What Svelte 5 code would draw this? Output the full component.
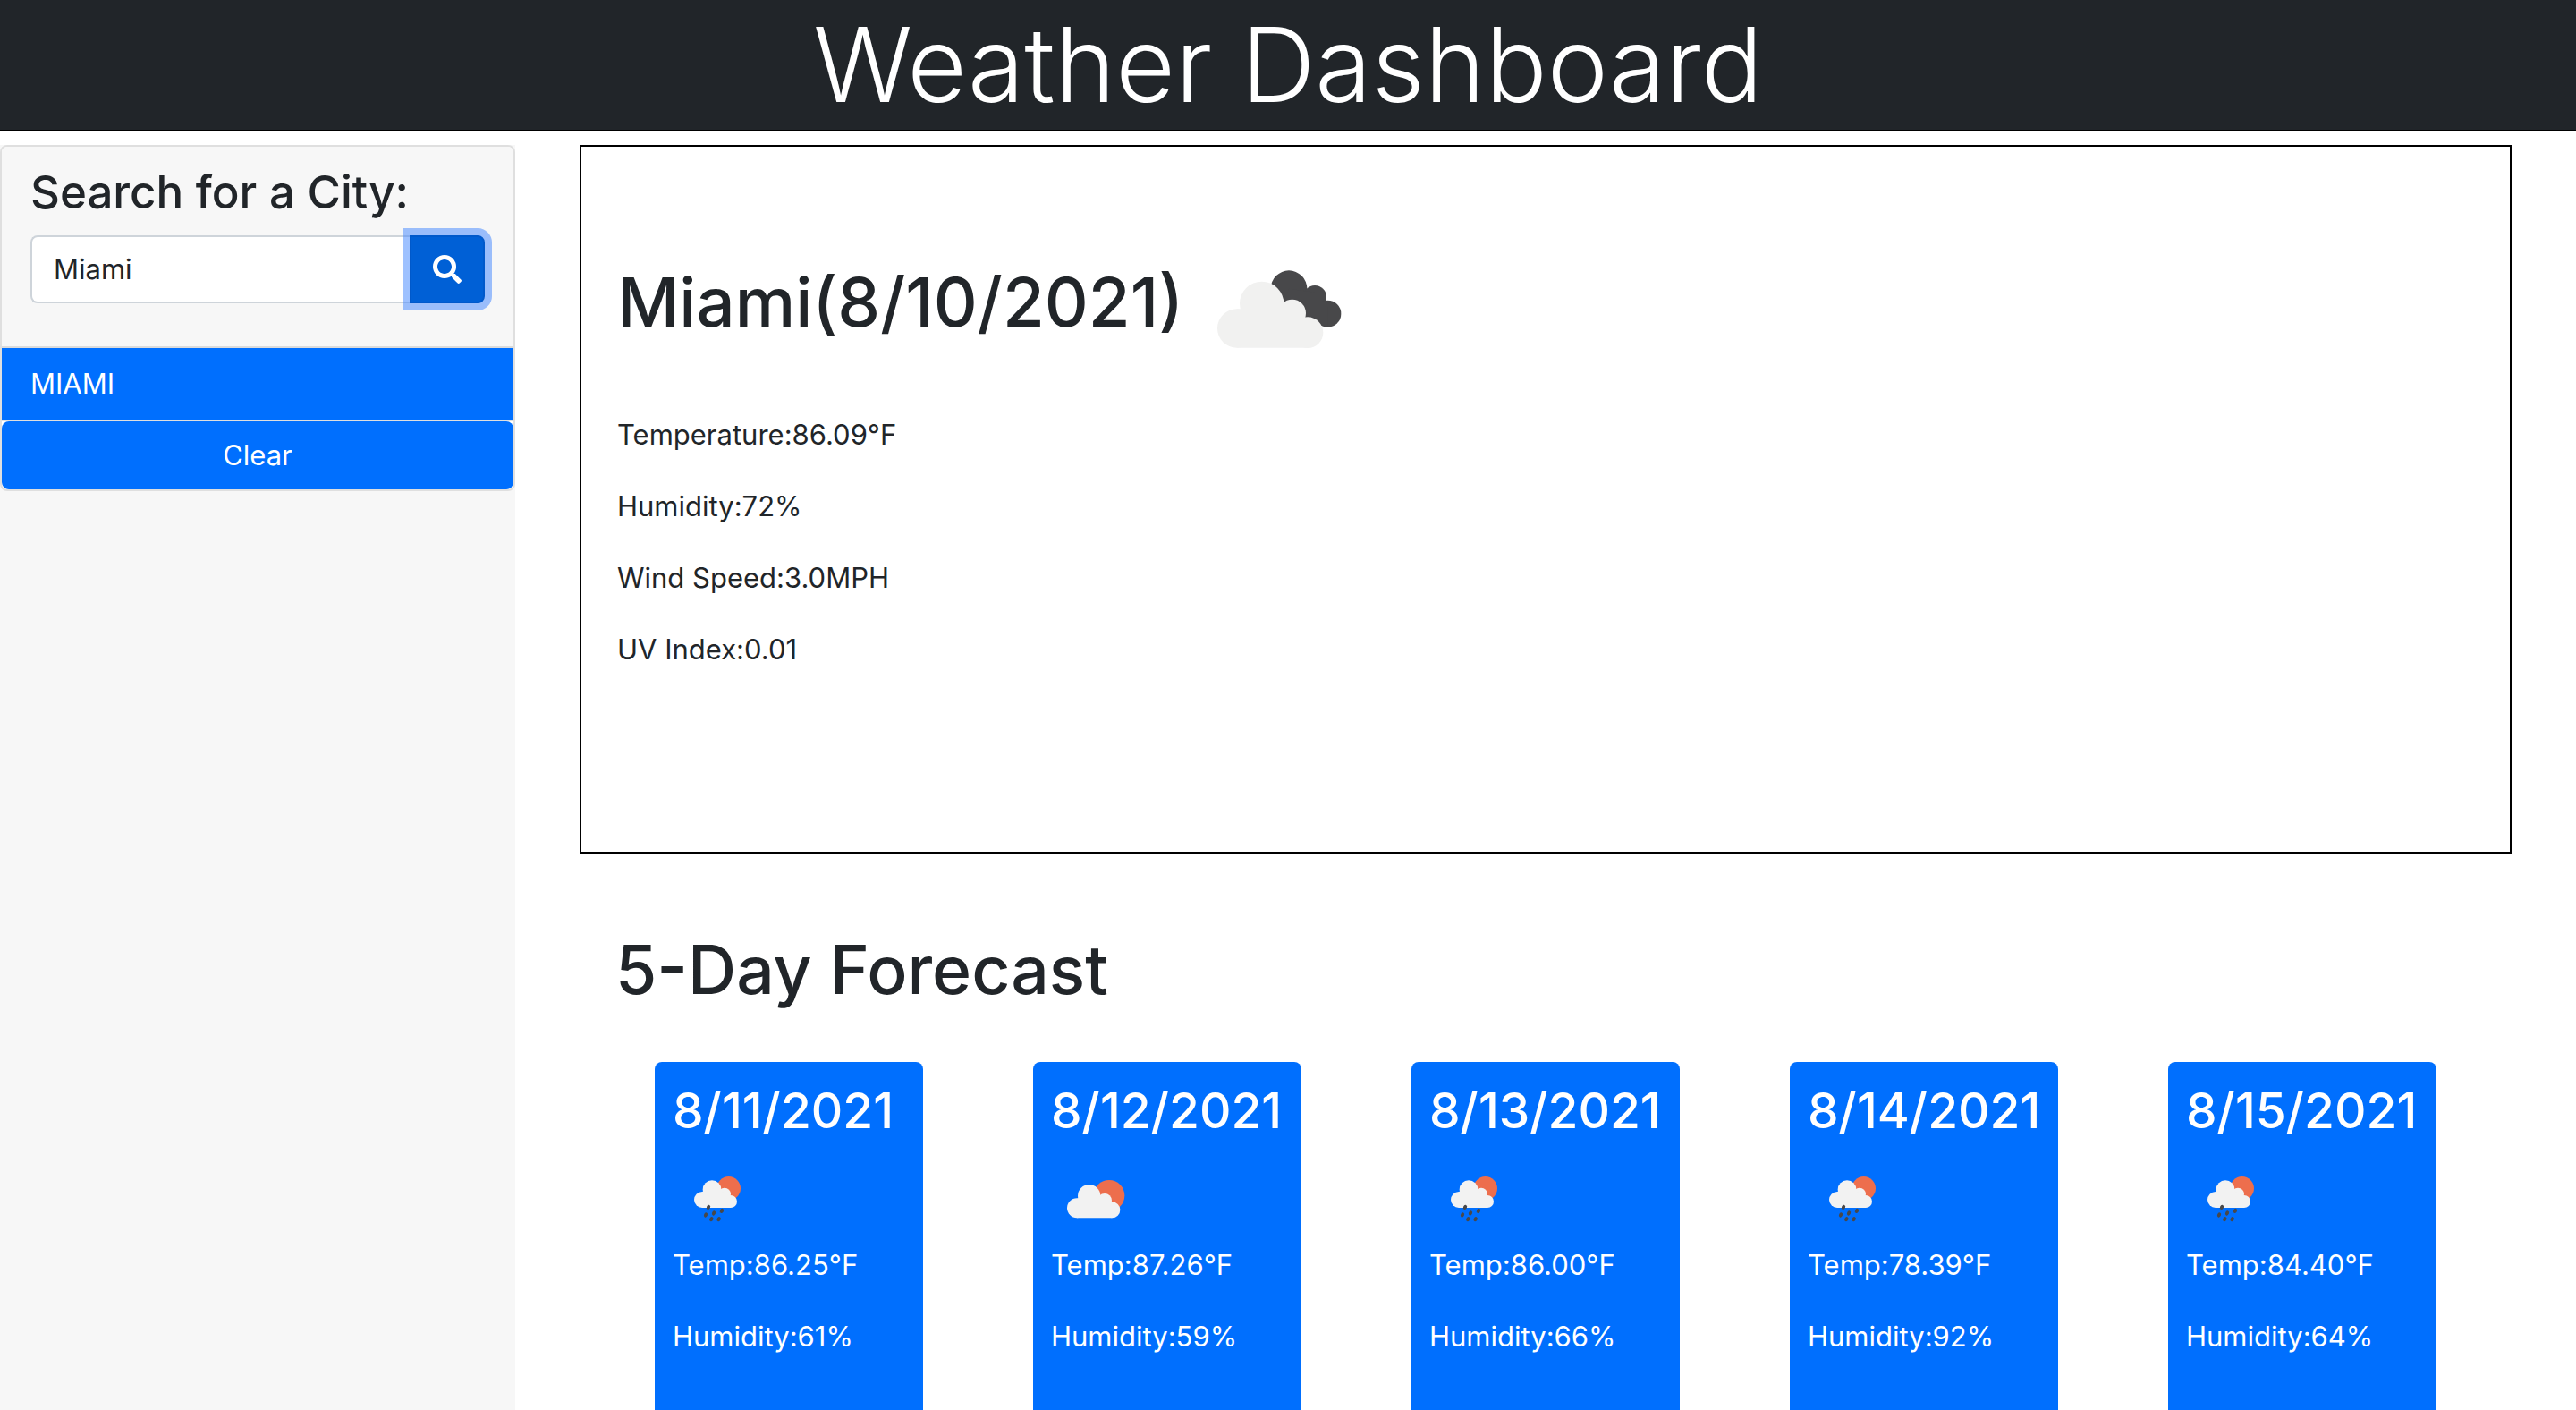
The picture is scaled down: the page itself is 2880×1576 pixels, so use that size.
<script>
  let city = $state('Miami');
  let history = $state(['MIAMI']);

  const readings = [
    'Temperature:86.09°F',
    'Humidity:72%',
    'Wind Speed:3.0MPH',
    'UV Index:0.01'
  ];

  const forecast = [
    { date: '8/11/2021', icon: 'rain', temp: '86.25', humidity: 61 },
    { date: '8/12/2021', icon: 'cloud', temp: '87.26', humidity: 59 },
    { date: '8/13/2021', icon: 'rain', temp: '86.00', humidity: 66 },
    { date: '8/14/2021', icon: 'rain', temp: '78.39', humidity: 92 },
    { date: '8/15/2021', icon: 'rain', temp: '84.40', humidity: 64 }
  ];

  const drops = [[156, 178], [147, 204], [174, 198], [201, 190], [166, 218], [191, 218]];

  function search(event) {
    event.preventDefault();
    const name = city.trim().toUpperCase();
    if (name && !history.includes(name)) history.push(name);
  }
</script>

<div class="page">
  <header class="banner">
    <h1>Weather Dashboard</h1>
  </header>

  <div class="content">
    <aside class="sidebar">
      <div class="card">
        <form class="search" onsubmit={search}>
          <label for="city">Search for a City:</label>
          <div class="group">
            <input id="city" type="text" bind:value={city} />
            <button class="go" type="submit" aria-label="Search">
              <svg viewBox="0 0 512 512" aria-hidden="true">
                <path fill="currentColor" d="M505 442.7L405.3 343c-4.5-4.5-10.6-7-17-7H372c27.6-35.3 44-79.7 44-128C416 93.1 322.9 0 208 0S0 93.1 0 208s93.1 208 208 208c48.3 0 92.7-16.4 128-44v16.3c0 6.4 2.5 12.5 7 17l99.7 99.7c9.4 9.4 24.6 9.4 33.9 0l28.3-28.3c9.4-9.4 9.4-24.6.1-34zM208 336c-70.7 0-128-57.2-128-128 0-70.7 57.2-128 128-128 70.7 0 128 57.2 128 128 0 70.7-57.2 128-128 128z" />
              </svg>
            </button>
          </div>
        </form>
        <ul class="history">
          {#each history as name}
            <li>{name}</li>
          {/each}
        </ul>
        <button class="clear" type="button" onclick={() => (history = [])}>Clear</button>
      </div>
    </aside>

    <main>
      <section class="current">
        <div class="place">
          <h2>Miami(8/10/2021)</h2>
          <svg class="sky" viewBox="-30 -129 600 600" role="img" aria-label="Broken clouds">
            <g fill="#48484a">
              <circle cx="300" cy="128" r="61" />
              <circle cx="387" cy="156" r="39" />
              <circle cx="430" cy="212" r="45" />
              <path d="M300 128L387 140L430 190V257L340 230L280 180Z" />
            </g>
            <g fill="#f1f1f0">
              <circle cx="125" cy="261" r="65" />
              <circle cx="209" cy="178" r="74" />
              <circle cx="311" cy="210" r="46" />
              <circle cx="363" cy="275" r="52" />
              <path d="M125 196H311L363 230V326H125Z" />
            </g>
          </svg>
        </div>
        {#each readings as line}
          <p>{line}</p>
        {/each}
      </section>

      <section class="forecast">
        <h2>5-Day Forecast</h2>
        <div class="days">
          {#each forecast as day}
            <article class="day">
              <h3>{day.date}</h3>
              {#if day.icon === 'rain'}
                <svg viewBox="36 0 300 300" role="img" aria-label="Rain">
                  <circle cx="224" cy="115" r="40" fill="#ed6e4d" />
                  <g fill="#f2f2f2">
                    <circle cx="135" cy="153" r="27" />
                    <circle cx="168" cy="119" r="31" />
                    <circle cx="210" cy="134" r="21" />
                    <circle cx="231" cy="159" r="21" />
                    <path d="M135 126L168 115L210 130L231 140V180H135Z" />
                  </g>
                  {#each drops as [x, y]}
                    <ellipse cx={x} cy={y} rx="6" ry="8" fill="#48484a" transform="rotate(25 {x} {y})" />
                  {/each}
                </svg>
              {:else}
                <svg viewBox="12 0 300 300" role="img" aria-label="Few clouds">
                  <circle cx="207" cy="139" r="52" fill="#ed6e4d" />
                  <g fill="#f2f2f2">
                    <circle cx="99" cy="181" r="33" />
                    <circle cx="140" cy="140" r="38" />
                    <circle cx="192" cy="156" r="24" />
                    <circle cx="217" cy="187" r="27" />
                    <path d="M99 150L140 130L192 150L217 165V214H99Z" />
                  </g>
                </svg>
              {/if}
              <p>Temp:{day.temp}°F</p>
              <p>Humidity:{day.humidity}%</p>
            </article>
          {/each}
        </div>
      </section>
    </main>
  </div>
</div>

<style>
  :global(body) {
    margin: 0;
    background: #fff;
  }
  .page {
    min-height: 100vh;
    display: flex;
    flex-direction: column;
    font: 400 31px/48px Inter, 'Liberation Sans', sans-serif;
    color: #212529;
  }
  .page :global(*) {
    box-sizing: border-box;
  }
  h1, h2, h3, p, ul {
    margin: 0;
    padding: 0;
  }
  .banner {
    background: #212529;
    border-bottom: 1px solid #000;
    text-align: center;
  }
  h1 {
    font-size: 115px;
    font-weight: 300;
    line-height: 145px;
    color: #fff;
  }
  .content {
    flex: 1;
    display: flex;
    padding-top: 16px;
  }
  .sidebar {
    width: 20%;
    background: #f7f7f7;
  }
  .card {
    background: #fff;
    border: 2px solid #dfdfdf;
    border-radius: 8px;
    overflow: hidden;
  }
  .search {
    padding: 18px 32px 48px;
    background: #f7f7f7;
    border-bottom: 2px solid #dbdbdb;
  }
  label {
    display: block;
    font-size: 51px;
    font-weight: 500;
    line-height: 65px;
    margin-bottom: 16px;
  }
  .group {
    display: flex;
    height: 76px;
  }
  input {
    flex: 1;
    min-width: 0;
    padding: 0 24px;
    border: 2px solid #ced4da;
    border-right: 0;
    border-radius: 8px 0 0 8px;
    background: #fff;
    font: inherit;
    color: inherit;
    outline: 0;
  }
  .go {
    width: 84px;
    padding: 0;
    border: 2px solid #0059cb;
    border-radius: 0 8px 8px 0;
    background: #0060d6;
    color: #fff;
    box-shadow: 0 0 0 8px rgba(61, 131, 255, 0.5);
    display: flex;
    align-items: center;
    justify-content: center;
  }
  .go svg {
    width: 32px;
    height: 32px;
  }
  .history {
    list-style: none;
  }
  .history li {
    padding: 16px 32px;
    background: #006ffe;
    color: #fff;
    border-bottom: 2px solid #dfdfdf;
  }
  .clear {
    display: block;
    width: 100%;
    height: 76px;
    border: 0;
    border-radius: 8px;
    background: #006ffe;
    color: #fff;
    font: inherit;
  }
  main {
    width: 75%;
    margin-left: 2.5%;
    display: flex;
    flex-direction: column;
  }
  .current {
    min-height: 792px;
    padding: 73px 40px 40px;
    border: 2px solid #000;
  }
  .place {
    display: flex;
    align-items: center;
    gap: 8px;
    margin-bottom: 25px;
  }
  h2 {
    font-size: 75px;
    font-weight: 500;
    line-height: 96px;
  }
  .place h2 {
    font-size: 76px;
  }
  .sky {
    width: 200px;
    height: 200px;
  }
  .current p {
    margin-bottom: 32px;
  }
  .forecast {
    flex: 1;
    display: flex;
    flex-direction: column;
    padding-top: 82px;
  }
  .forecast h2 {
    padding-left: 40px;
    margin-bottom: 55px;
  }
  .days {
    flex: 1;
    display: flex;
    justify-content: space-between;
    padding: 0 84px;
  }
  .day {
    width: 300px;
    padding: 20px 20px 16px;
    border-radius: 8px 8px 0 0;
    background: #006ffe;
    color: #fff;
  }
  h3 {
    font-size: 55px;
    font-weight: 500;
    line-height: 68px;
    margin-bottom: 15px;
  }
  .day svg {
    display: block;
    width: 100px;
    height: 100px;
  }
  .day p + p {
    margin-top: 32px;
  }
</style>
